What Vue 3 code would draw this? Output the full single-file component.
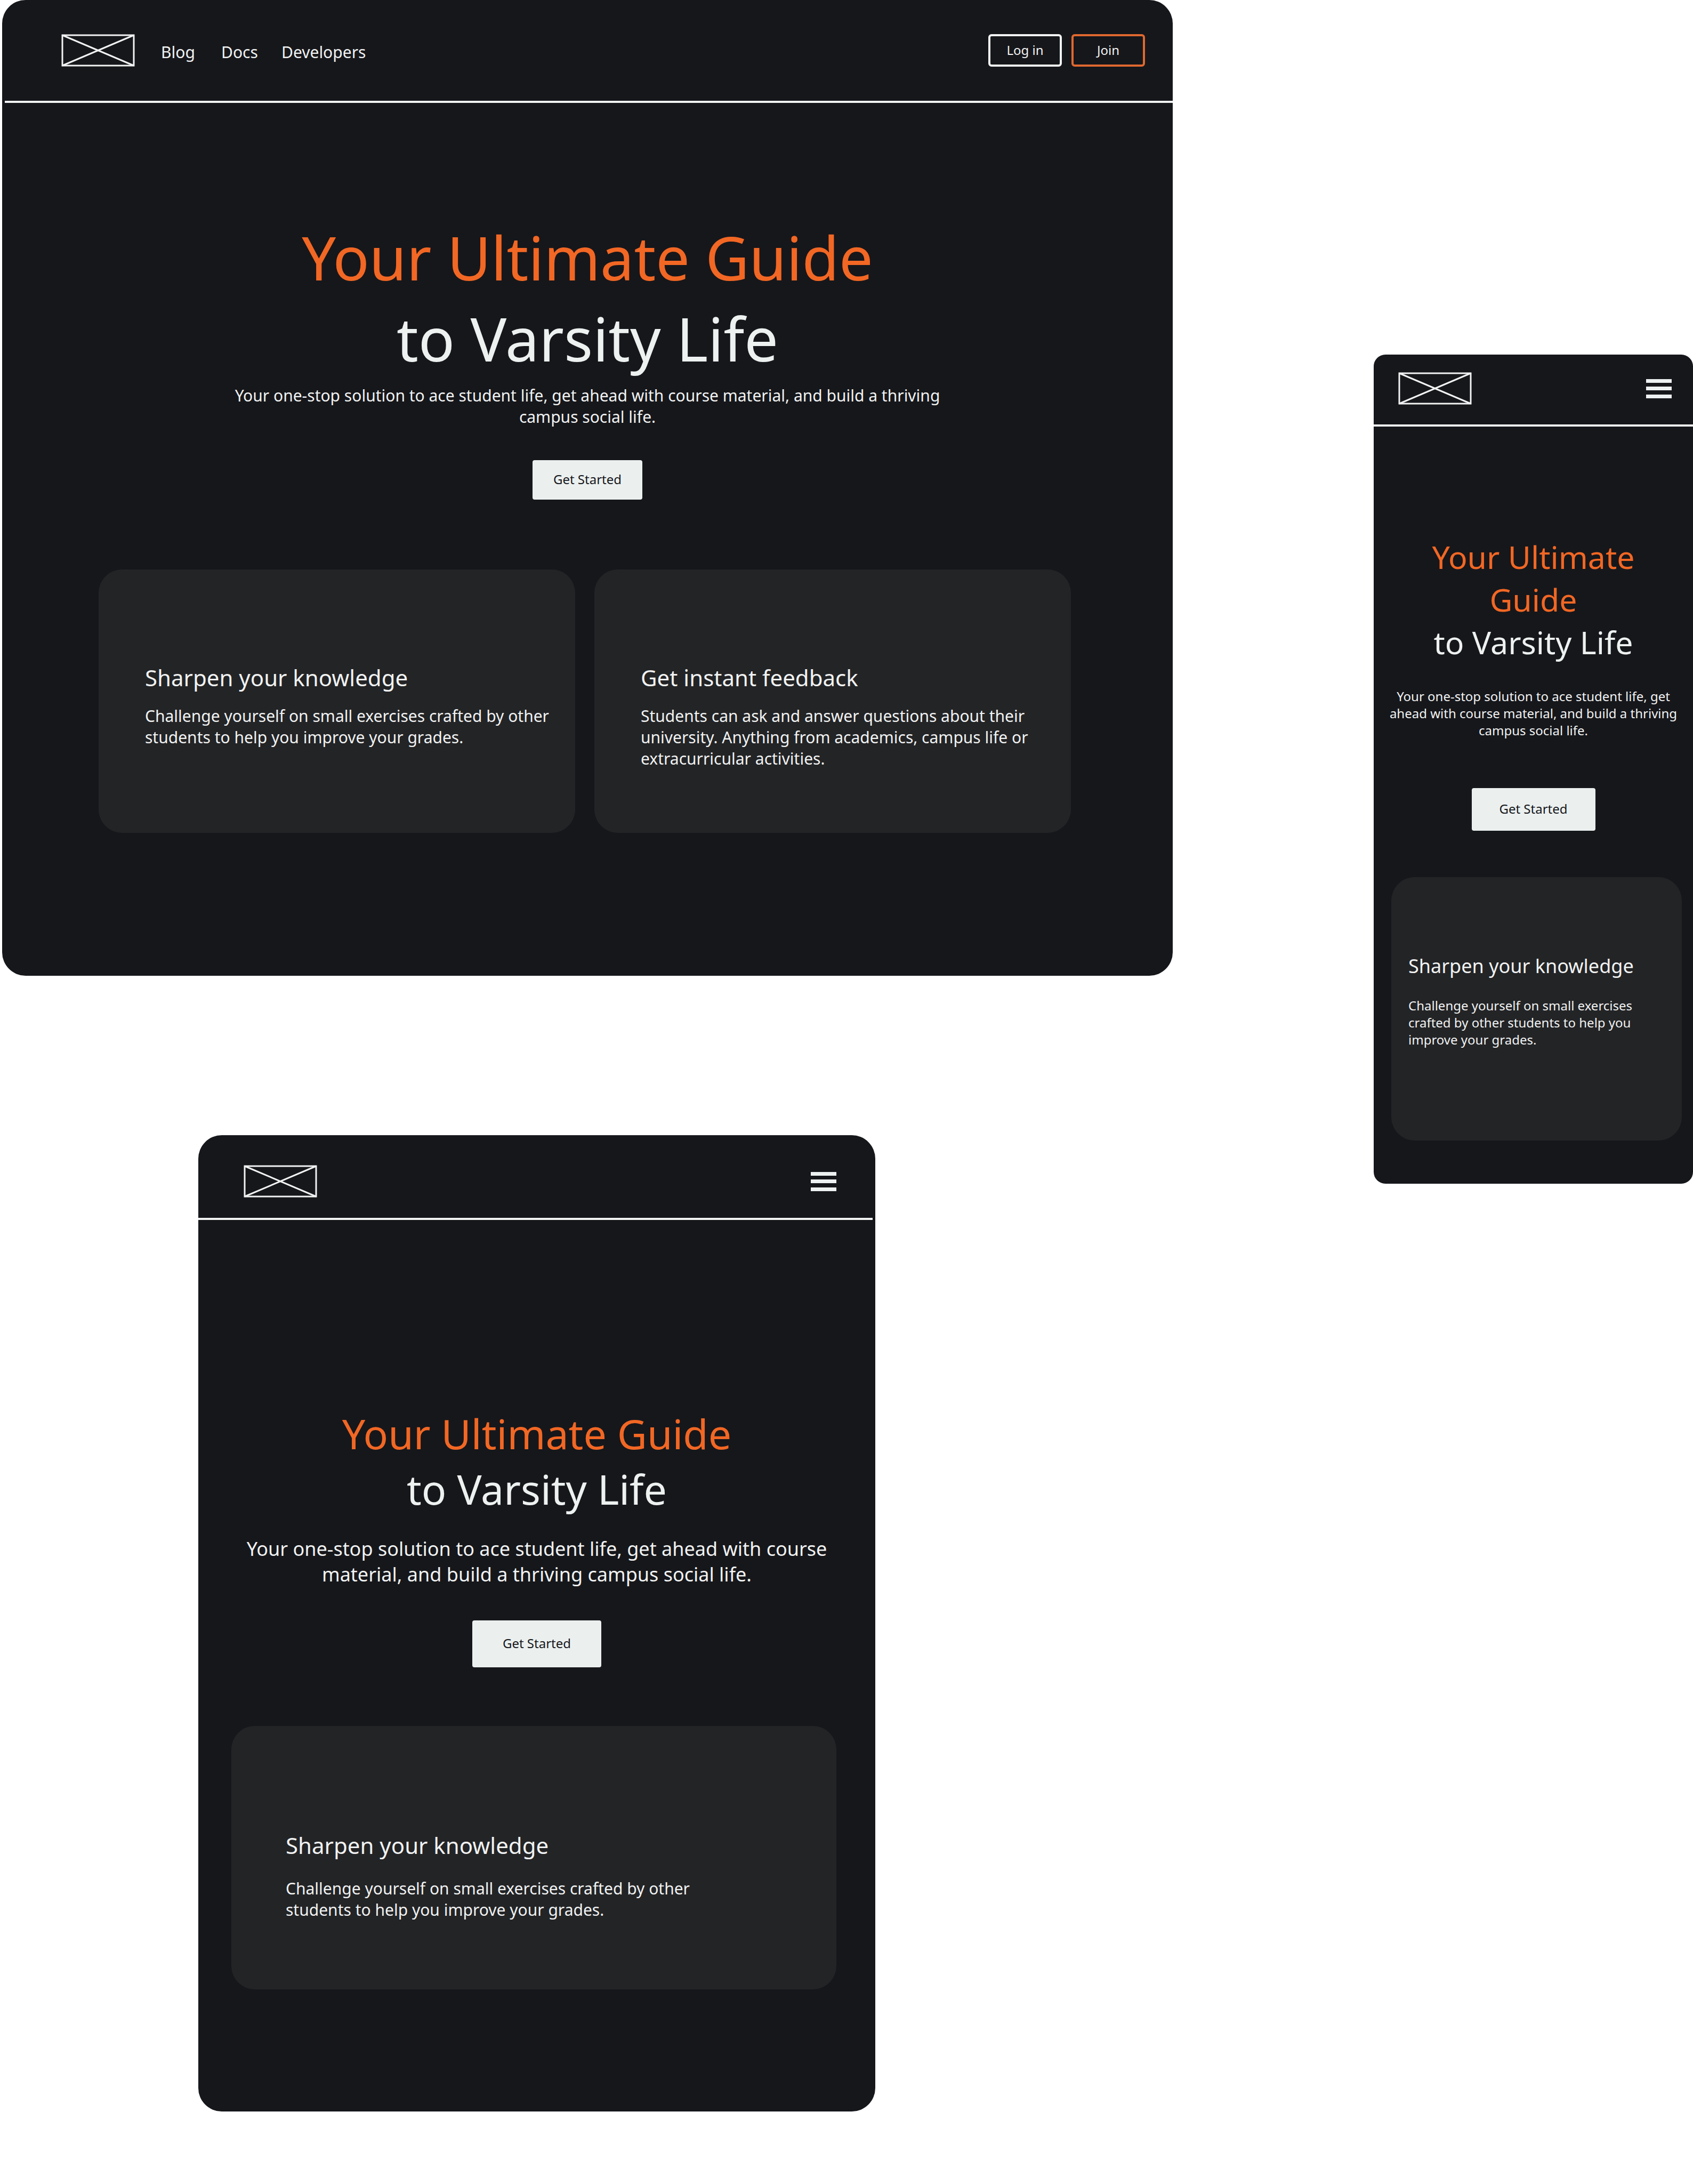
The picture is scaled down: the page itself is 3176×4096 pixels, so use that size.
<script setup>
const sharpen = {
  title: 'Sharpen your knowledge',
  body: 'Challenge yourself on small exercises crafted by other students to help you improve your grades.',
}
const feedback = {
  title: 'Get instant feedback',
  body: 'Students can ask and answer questions about their university. Anything from academics, campus life or extracurricular activities.',
}

const boards = [
  { name: 'desktop', links: ['Blog', 'Docs', 'Developers'], cards: [sharpen, feedback] },
  { name: 'tablet', links: [], cards: [sharpen] },
  { name: 'phone', links: [], cards: [sharpen] },
]
</script>

<template>
  <main class="canvas">
    <section v-for="board in boards" :key="board.name" class="board" :class="board.name">
      <header class="bar">
        <a href="#" class="logo" aria-label="Home">
          <svg viewBox="0 0 138 61" width="138" height="61" fill="none" stroke="currentColor" stroke-width="3">
            <rect x="2" y="2" width="134" height="57" />
            <path d="M2 2 136 59M136 2 2 59" />
          </svg>
        </a>
        <template v-if="board.links.length">
          <nav class="links">
            <a v-for="link in board.links" :key="link" href="#">{{ link }}</a>
          </nav>
          <div class="account">
            <button type="button" class="outline">Log in</button>
            <button type="button" class="outline join">Join</button>
          </div>
        </template>
        <button v-else type="button" class="menu" aria-label="Menu">
          <svg viewBox="0 0 48 36" width="48" height="36" fill="currentColor">
            <rect width="48" height="7" />
            <rect y="14" width="48" height="7" />
            <rect y="29" width="48" height="7" />
          </svg>
        </button>
      </header>

      <div class="hero">
        <h1><span class="accent">Your Ultimate Guide</span> <span class="rest">to Varsity Life</span></h1>
        <p class="lead">
          Your one-stop solution to ace student life, get ahead with course material, and build a thriving campus
          social life.
        </p>
        <button type="button" class="start">Get Started</button>
      </div>

      <div class="cards">
        <article v-for="card in board.cards" :key="card.title" class="card">
          <h2>{{ card.title }}</h2>
          <p>{{ card.body }}</p>
        </article>
      </div>
    </section>
  </main>
</template>

<style>
body {
  margin: 0;
  background: #fff;
}
</style>

<style scoped>
.canvas {
  display: grid;
  grid-template-columns: 368fr 1270fr 558fr 377fr 599fr;
  align-items: start;
  row-gap: 299px;
  padding: 0 0 136px 4px;
  font-family: "Noto Sans", "Open Sans", sans-serif;
  color: #f1f2f2;
}

.board {
  box-sizing: border-box;
  background: #16171b;
  border-radius: 44px;
}

.desktop {
  grid-column: 1 / 4;
  grid-row: 1;
  padding-bottom: 268px;
}

.tablet {
  grid-column: 2;
  grid-row: 2;
  padding-bottom: 229px;
}

.phone {
  grid-column: 5;
  grid-row: 1 / 3;
  margin-top: 665px;
  padding-bottom: 81px;
  border-radius: 22px;
}

.bar {
  display: flex;
  align-items: center;
  border-bottom: 4px solid #f1f2f2;
}

.desktop .bar {
  margin-left: 5px;
  padding: 64px 52px 64px 106px;
}

.tablet .bar {
  justify-content: space-between;
  margin-right: 5px;
  padding: 56px 68px 38px 85px;
}

.phone .bar {
  justify-content: space-between;
  padding: 33px 40px 37px 46px;
}

.logo,
.logo svg,
.menu svg {
  display: block;
}

.logo {
  color: #f1f2f2;
}

button {
  font: inherit;
  font-size: 24px;
  line-height: 32px;
  cursor: pointer;
}

.links {
  display: grid;
  grid-template-columns: 113px 113px auto;
  padding-top: 6px;
  margin-left: 49px;
  font-size: 30px;
  line-height: 40px;
}

.links a {
  color: inherit;
  text-decoration: none;
}

.account {
  display: flex;
  gap: 18px;
  margin-left: auto;
}

.outline {
  box-sizing: border-box;
  width: 138px;
  height: 61px;
  padding: 0 0 2px;
  border: 4px solid #f1f2f2;
  border-radius: 6px;
  background: none;
  color: inherit;
}

.join {
  border-color: #e0682f;
}

.menu {
  padding: 0;
  border: 0;
  background: none;
  color: #eef1f1;
}

.hero {
  display: flex;
  flex-direction: column;
  align-items: center;
  text-align: center;
}

h1,
h2,
p {
  margin: 0;
  font-weight: 400;
}

h1 span {
  display: block;
}

.accent {
  color: #f26724;
}

.rest {
  color: #edf1f0;
}

.start {
  width: 206px;
  height: 74px;
  padding: 0 0 2px;
  border: 0;
  border-radius: 4px;
  background: #ebf0ef;
  color: #16171b;
}

.desktop .hero {
  padding-top: 213px;
}

.desktop h1 {
  font-size: 113px;
  line-height: 152px;
}

.desktop .lead {
  max-width: 1360px;
  margin: 12px 0 61px;
  font-size: 30px;
  line-height: 40px;
}

.tablet .hero {
  padding-top: 349px;
}

.tablet h1 {
  font-size: 77px;
  line-height: 104px;
}

.tablet .lead {
  max-width: 1120px;
  margin: 36px 0 62px;
  font-size: 36px;
  line-height: 48px;
}

.tablet .start {
  width: 242px;
  height: 88px;
}

.phone .hero {
  padding-top: 204px;
}

.phone h1 {
  max-width: 480px;
  font-size: 59px;
  line-height: 80px;
}

.phone .lead {
  max-width: 560px;
  margin: 46px 0 92px;
  font-size: 24px;
  line-height: 32px;
}

.phone .start {
  width: 232px;
  height: 80px;
}

.cards {
  display: grid;
}

.desktop .cards {
  grid-template-columns: 1fr 1fr;
  gap: 36px;
  margin: 131px 191px 0 181px;
}

.tablet .cards {
  margin: 110px 73px 0 62px;
}

.phone .cards {
  margin: 87px 21px 0 33px;
}

.card {
  box-sizing: border-box;
  min-height: 494px;
  padding: 175px 48px 48px 87px;
  border-radius: 44px;
  background: #232426;
}

.card h2 {
  font-size: 42px;
  line-height: 56px;
}

.card p {
  max-width: 758px;
  margin-top: 24px;
  font-size: 30px;
  line-height: 40px;
}

.tablet .card {
  padding: 196px 48px 48px 102px;
}

.tablet .card p {
  margin-top: 33px;
}

.phone .card {
  padding: 143px 32px 48px;
}

.phone .card h2 {
  font-size: 36px;
  line-height: 48px;
}

.phone .card p {
  max-width: 440px;
  margin-top: 34px;
  font-size: 24px;
  line-height: 32px;
}
</style>
